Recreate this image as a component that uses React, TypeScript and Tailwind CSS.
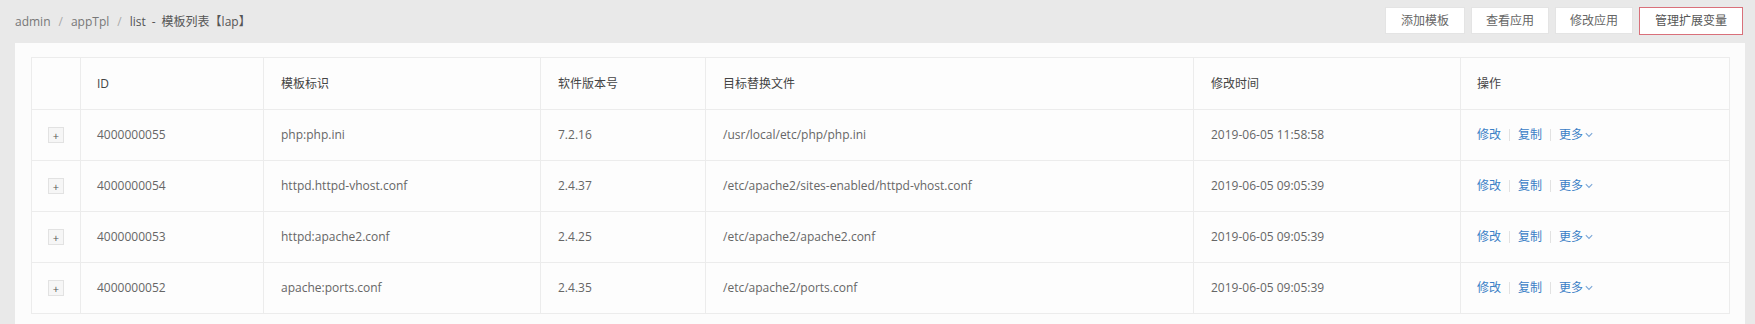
import React from "react";

const rows = [
  { id: "4000000055", tag: "php:php.ini", ver: "7.2.16", file: "/usr/local/etc/php/php.ini", time: "2019-06-05 11:58:58" },
  { id: "4000000054", tag: "httpd.httpd-vhost.conf", ver: "2.4.37", file: "/etc/apache2/sites-enabled/httpd-vhost.conf", time: "2019-06-05 09:05:39" },
  { id: "4000000053", tag: "httpd:apache2.conf", ver: "2.4.25", file: "/etc/apache2/apache2.conf", time: "2019-06-05 09:05:39" },
  { id: "4000000052", tag: "apache:ports.conf", ver: "2.4.35", file: "/etc/apache2/ports.conf", time: "2019-06-05 09:05:39" },
];

const widths = [49, 183, 277, 165, 488, 267, 269];

function Chevron() {
  return (
    <svg width="8" height="6" viewBox="0 0 8 6" className="ml-[2px] inline-block">
      <path d="M0.8 1.2 L4 4.4 L7.2 1.2" fill="none" stroke="#7aa6d6" strokeWidth="1.1" />
    </svg>
  );
}

export default function App() {
  const font = { fontFamily: '"Open Sans", "Noto Sans CJK SC", sans-serif' };
  return (
    <div className="min-h-[324px] w-[1755px] bg-[#e9e9e9] text-[12px]" style={font}>
      <div className="flex h-[43px] items-center justify-between pl-[15px] pr-[12px]">
        <div className="flex items-center text-[12px] text-[#777]">
          <span>admin</span>
          <span className="mx-[8px] text-[#aaa]">/</span>
          <span>appTpl</span>
          <span className="mx-[8px] text-[#aaa]">/</span>
          <span className="text-[#555]">list</span>
          <span className="mx-[6px] text-[#555]">-</span>
          <span className="text-[#555]">模板列表【lap】</span>
        </div>
        <div className="flex items-center gap-[6px] pb-[2px]">
          <button className="h-[27px] w-[80px] border border-[#e4e4e4] bg-white text-[12px] text-[#666]">添加模板</button>
          <button className="h-[27px] w-[78px] border border-[#e4e4e4] bg-white text-[12px] text-[#666]">查看应用</button>
          <button className="h-[27px] w-[78px] border border-[#e4e4e4] bg-white text-[12px] text-[#666]">修改应用</button>
          <button className="h-[28px] w-[104px] border border-[#d9707a] bg-white text-[12px] text-[#555]">管理扩展变量</button>
        </div>
      </div>
      <div className="ml-[15px] mr-[10px] bg-[#fcfcfc] px-[16px] pb-[14px] pt-[14px]">
        <table className="w-[1698px] table-fixed border-collapse bg-[#fdfdfd] text-left">
          <colgroup>
            {widths.map((w, i) => (
              <col key={i} style={{ width: w }} />
            ))}
          </colgroup>
          <thead>
            <tr className="h-[52px] text-[#444]">
              <th className="border border-[#ececec] font-normal"></th>
              <th className="border border-[#ececec] pl-[16px] font-normal">ID</th>
              <th className="border border-[#ececec] pl-[17px] font-normal">模板标识</th>
              <th className="border border-[#ececec] pl-[17px] font-normal">软件版本号</th>
              <th className="border border-[#ececec] pl-[17px] font-normal">目标替换文件</th>
              <th className="border border-[#ececec] pl-[17px] font-normal">修改时间</th>
              <th className="border border-[#ececec] pl-[16px] font-normal">操作</th>
            </tr>
          </thead>
          <tbody>
            {rows.map((r) => (
              <tr key={r.id} className="h-[51px] text-[#666]">
                <td className="border border-[#ececec]">
                  <div className="mx-auto flex h-[16px] w-[16px] items-center justify-center border border-[#e2e2e2] bg-[#f6f6f6] text-[11px] leading-none text-[#555]">+</div>
                </td>
                <td className="border border-[#ececec] pl-[16px]">{r.id}</td>
                <td className="border border-[#ececec] pl-[17px]">{r.tag}</td>
                <td className="border border-[#ececec] pl-[17px]">{r.ver}</td>
                <td className="border border-[#ececec] pl-[17px]">{r.file}</td>
                <td className="border border-[#ececec] pl-[17px]">{r.time}</td>
                <td className="border border-[#ececec] pl-[16px]">
                  <div className="flex items-center text-[#3a80c6]">
                    <span>修改</span>
                    <span className="mx-[8px] h-[12px] w-px bg-[#e2e2e2]"></span>
                    <span>复制</span>
                    <span className="mx-[8px] h-[12px] w-px bg-[#e2e2e2]"></span>
                    <span className="flex items-center">更多<Chevron /></span>
                  </div>
                </td>
              </tr>
            ))}
          </tbody>
        </table>
      </div>
    </div>
  );
}
